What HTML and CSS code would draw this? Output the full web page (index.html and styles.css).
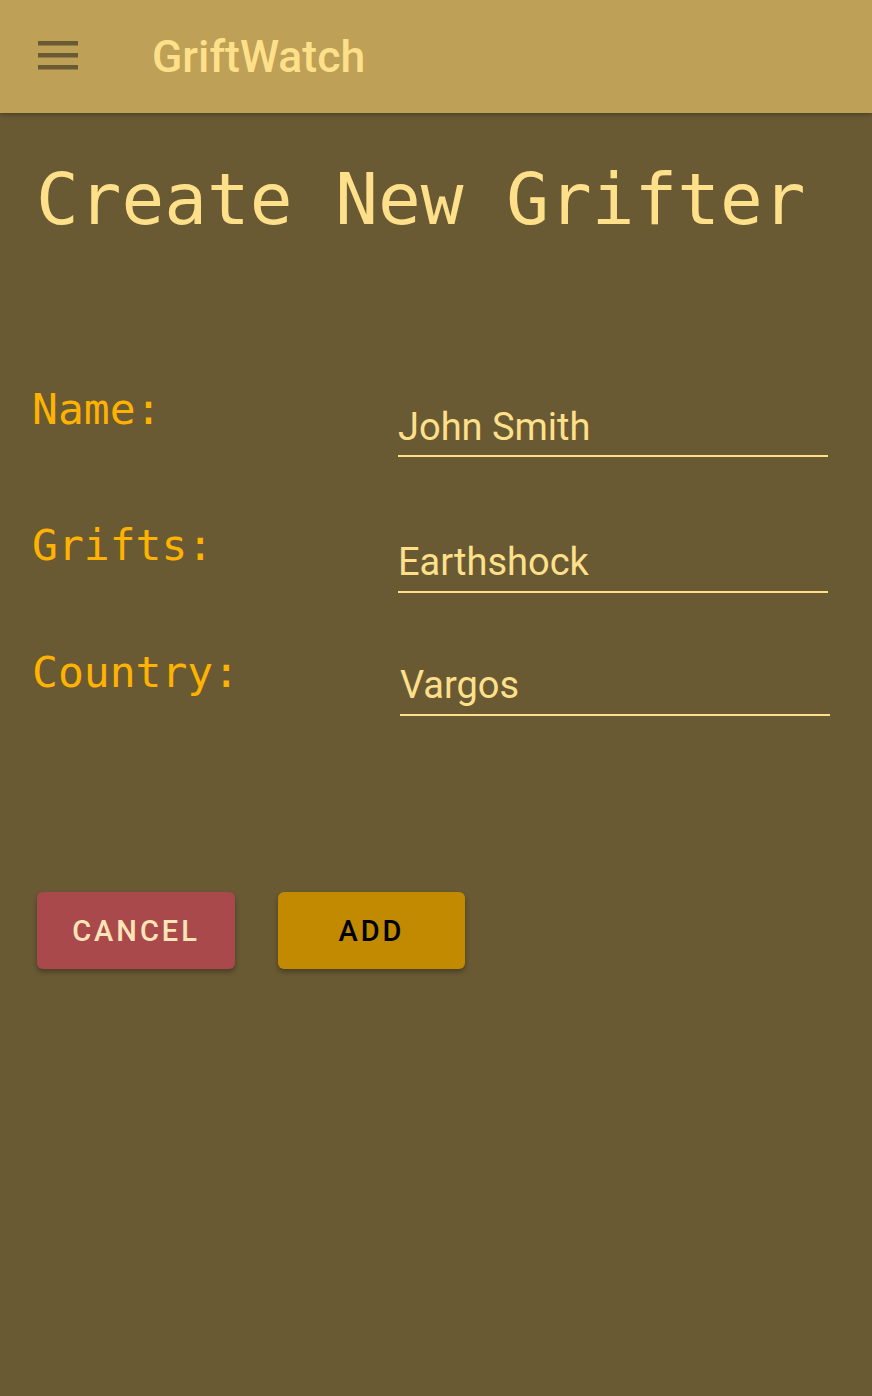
FILE: index.html
```
<!DOCTYPE html>
<html>
<head>
<meta charset="utf-8">
<link rel="stylesheet" href="styles.css">
</head>
<body>
<header class="appbar">
  <svg class="menu" width="40" height="30" viewBox="0 0 40 30">
    <rect x="0" y="1" width="40" height="4.5" fill="#6a5a33"/>
    <rect x="0" y="13" width="40" height="4.5" fill="#6a5a33"/>
    <rect x="0" y="25" width="40" height="4.5" fill="#6a5a33"/>
  </svg>
  <div class="brand">GriftWatch</div>
</header>
<main class="page">
  <h1 class="title">Create New Grifter</h1>
  <div class="form">
    <div class="row row1">
      <label class="label">Name:</label>
      <div class="field f1"><span>John Smith</span></div>
    </div>
    <div class="row row2">
      <label class="label">Grifts:</label>
      <div class="field f2"><span>Earthshock</span></div>
    </div>
    <div class="row row3">
      <label class="label">Country:</label>
      <div class="field f3"><span>Vargos</span></div>
    </div>
  </div>
  <div class="actions">
    <button class="btn cancel">CANCEL</button>
    <button class="btn add">ADD</button>
  </div>
</main>
</body>
</html>
```
FILE: styles.css
```
html, body {
  margin: 0;
  padding: 0;
}
body {
  background: #695a34;
  width: 872px;
  height: 1396px;
  overflow: hidden;
}
.appbar {
  height: 113px;
  background: #bea057;
  display: flex;
  align-items: center;
  box-shadow: 0 2px 4px rgba(0,0,0,0.25);
  position: relative;
}
.menu {
  margin-left: 38px;
  margin-top: -3px;
}
.brand {
  margin-left: 74px;
  font-family: Roboto, "Liberation Sans", sans-serif;
  font-weight: 500;
  font-size: 44.5px;
  color: #ffe08a;
}
.title {
  margin: 45px 0 0 36px;
  font-family: "DejaVu Sans Mono", monospace;
  font-weight: normal;
  font-size: 71px;
  line-height: 84px;
  color: #ffe08a;
}
.form {
  margin-top: 142px;
  padding-left: 32px;
}
.row {
  display: flex;
  align-items: flex-start;
}
.row1 { height: 136px; }
.row2 { height: 127px; }
.row3 { height: 245px; }
.label {
  width: 366px;
  font-family: "DejaVu Sans Mono", monospace;
  font-size: 43px;
  line-height: 50px;
  color: #ffb300;
}
.field {
  width: 430px;
  font-family: Roboto, "Liberation Sans", sans-serif;
  font-size: 38px;
  line-height: 46px;
  color: #ffe08a;
  padding-bottom: 5px;
  border-bottom: 2px solid #ffe08a;
}
.f1 { margin-top: 20px; }
.f2 { margin-top: 19px; padding-bottom: 6px; }
.f3 { margin-top: 15px; margin-left: 2px; padding-bottom: 6px; }
.actions {
  display: flex;
  gap: 43px;
  padding-left: 37px;
}
.btn {
  height: 77px;
  border: none;
  border-radius: 6px;
  font-family: Roboto, "Liberation Sans", sans-serif;
  font-weight: 500;
  font-size: 29px;
  letter-spacing: 3px;
  box-shadow: 0 3px 5px rgba(0,0,0,0.3);
  padding: 0;
}
.cancel {
  width: 198px;
  background: #a9494b;
  color: #ffe4b8;
}
.add {
  width: 187px;
  background: #c18a00;
  color: #000;
}
```
